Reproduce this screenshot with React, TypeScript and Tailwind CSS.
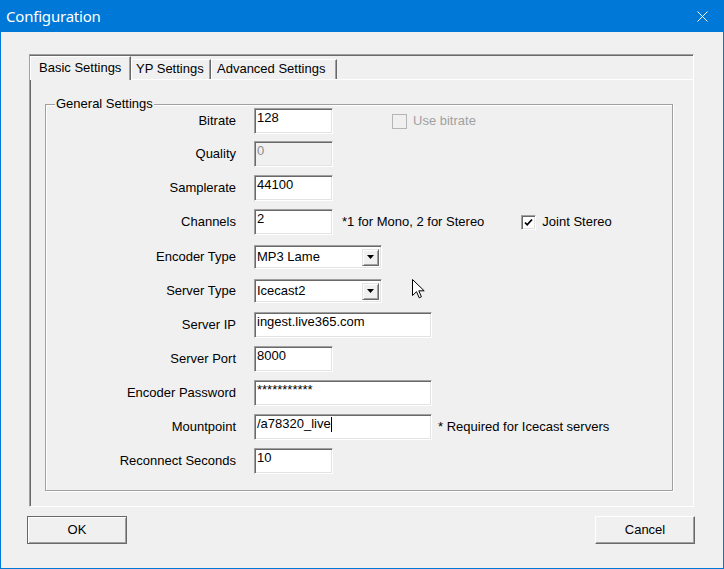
/**
 * Configuration dialog (classic Win32 look)
 */
import type { ReactNode } from 'react'

const sunken =
  'border border-t-[#a0a0a0] border-l-[#a0a0a0] border-r-white border-b-white shadow-[inset_1px_1px_0_#696969,inset_-1px_-1px_0_#e3e3e3]'

function TextBox({ width, value, disabled, children }: { width: string; value?: string; disabled?: boolean; children?: ReactNode }) {
  return (
    <div
      className={`${width} h-[26px] ${sunken} ${disabled ? 'bg-[#f0f0f0] text-[#8c8c8c]' : 'bg-white text-black'} pl-[2px] pt-px leading-[16px] flex items-start`}
    >
      {children ?? value}
    </div>
  )
}

function ComboBox({ value }: { value: string }) {
  return (
    <div className={`w-[128px] h-[24px] ${sunken} bg-white flex items-center justify-between pl-[2px] pr-[2px]`}>
      <span className="leading-[16px]">{value}</span>
      <div className="w-[17px] h-[17px] bg-[#f0f0f0] border border-t-[#e3e3e3] border-l-[#e3e3e3] border-r-[#696969] border-b-[#696969] shadow-[inset_1px_1px_0_#fff,inset_-1px_-1px_0_#a0a0a0] flex items-center justify-center">
        <svg width="7" height="4" viewBox="0 0 7 4">
          <path d="M0 0h7L3.5 4z" fill="#000" />
        </svg>
      </div>
    </div>
  )
}

function CheckBox({ label, checked, disabled }: { label: string; checked?: boolean; disabled?: boolean }) {
  return (
    <div className="flex items-center">
      <div
        className={`w-[15px] h-[15px] border ${
          disabled
            ? 'border-[#b5b5b5] bg-[#f0f0f0]'
            : `${sunken} bg-white`
        } flex items-center justify-center`}
      >
        {checked && (
          <svg width="9" height="9" viewBox="0 0 9 9">
            <path d="M1 4.5l2.2 2.3L8 1.5" fill="none" stroke="#000" strokeWidth="1.8" />
          </svg>
        )}
      </div>
      <span className={`ml-[6px] ${disabled ? 'text-[#a0a0a0]' : 'text-black'}`}>{label}</span>
    </div>
  )
}

function Row({ label, children, className = '' }: { label: string; children: ReactNode; className?: string }) {
  return (
    <div className={`flex h-[34px] items-center ${className}`}>
      <div className="w-[190px] text-right">{label}</div>
      <div className="ml-[18px] flex items-center">{children}</div>
    </div>
  )
}

function Button({ label, isDefault }: { label: string; isDefault?: boolean }) {
  return (
    <button
      className={`w-[100px] h-[28px] bg-[#f0f0f0] ${
        isDefault
          ? 'border border-[#696969] shadow-[inset_1px_1px_0_#fff,inset_-1px_-1px_0_#a0a0a0]'
          : 'border border-t-white border-l-white border-r-[#696969] border-b-[#696969] shadow-[inset_-1px_-1px_0_#a0a0a0]'
      }`}
    >
      {label}
    </button>
  )
}

export default function App() {
  return (
    <div
      className="relative w-[724px] h-[569px] bg-[#0078d7] flex flex-col px-px pb-px text-[13px] text-black"
      style={{ fontFamily: '"Liberation Sans", Arial, sans-serif' }}
    >
      {/* title bar */}
      <div className="h-[32px] flex items-center justify-between pl-[5px] pr-[15px] text-white">
        <span className="text-[15px] tracking-[-0.2px]" style={{ fontFamily: '"Noto Sans", "Open Sans", sans-serif' }}>
          Configuration
        </span>
        <svg width="11" height="11" viewBox="0 0 11 11">
          <path d="M0.5 0.5L10.5 10.5M10.5 0.5L0.5 10.5" stroke="#fff" strokeWidth="1" />
        </svg>
      </div>

      <div className="flex-1 bg-[#f0f0f0] flex flex-col pl-[28px] pt-[22px]">
        {/* tab control */}
        <div className="w-[665px] h-[453px] border border-t-[#a0a0a0] border-l-[#a0a0a0] border-r-white border-b-white shadow-[inset_1px_1px_0_#696969] flex flex-col">
          <div className="h-[24px] flex items-end">
            <div className="relative z-10 -mb-px w-[101px] h-[24px] bg-[#f0f0f0] border-t border-l border-white border-r border-r-[#696969] shadow-[inset_-1px_0_0_#a0a0a0] pl-[8px] pt-[3px] leading-[16px]">
              Basic Settings
            </div>
            <div className="w-[80px] h-[20px] border-t border-l border-white border-r border-r-[#696969] shadow-[inset_-1px_0_0_#a0a0a0] pl-[4px] pt-px leading-[16px]">
              YP Settings
            </div>
            <div className="w-[126px] h-[20px] border-t border-l border-white border-r border-r-[#696969] shadow-[inset_-1px_0_0_#a0a0a0] pl-[5px] pt-px leading-[16px]">
              Advanced Settings
            </div>
          </div>
          <div className="flex-1 border-t border-white">
            {/* group box */}
            <div className="relative ml-[15px] mt-[24px] w-[628px] h-[387px] border border-[#a0a0a0] shadow-[inset_1px_1px_0_#fff,1px_1px_0_#fff]">
              <span className="absolute left-[9px] -top-[9px] bg-[#f0f0f0] px-px leading-[16px]">General Settings</span>
              <div className="-mt-[1px] flex flex-col">
                <Row label="Bitrate">
                  <TextBox width="w-[79px]" value="128" />
                  <div className="ml-[59px]">
                    <CheckBox label="Use bitrate" disabled />
                  </div>
                </Row>
                <Row label="Quality" className="-mt-[1px]">
                  <TextBox width="w-[79px]" value="0" disabled />
                </Row>
                <Row label="Samplerate">
                  <TextBox width="w-[79px]" value="44100" />
                </Row>
                <Row label="Channels">
                  <TextBox width="w-[79px]" value="2" />
                  <span className="ml-[9px]">*1 for Mono, 2 for Stereo</span>
                  <div className="ml-[37px]">
                    <CheckBox label="Joint Stereo" checked />
                  </div>
                </Row>
                <Row label="Encoder Type" className="mt-[1px]">
                  <ComboBox value="MP3 Lame" />
                </Row>
                <Row label="Server Type">
                  <ComboBox value="Icecast2" />
                </Row>
                <Row label="Server IP">
                  <TextBox width="w-[178px]" value="ingest.live365.com" />
                </Row>
                <Row label="Server Port">
                  <TextBox width="w-[79px]" value="8000" />
                </Row>
                <Row label="Encoder Password">
                  <TextBox width="w-[178px]" value="***********" />
                </Row>
                <Row label="Mountpoint">
                  <TextBox width="w-[178px]">
                    <span>/a78320_live</span>
                    <span className="mt-px w-px h-[15px] bg-black" />
                  </TextBox>
                  <span className="ml-[6px]">* Required for Icecast servers</span>
                </Row>
                <Row label="Reconnect Seconds">
                  <TextBox width="w-[79px]" value="10" />
                </Row>
              </div>
            </div>
          </div>
        </div>

        {/* dialog buttons */}
        <div className="-ml-[2px] mt-[9px] w-[668px] flex justify-between">
          <Button label="OK" isDefault />
          <Button label="Cancel" />
        </div>
      </div>

      {/* mouse pointer */}
      <svg className="absolute left-[412px] top-[279px]" width="13" height="20" viewBox="0 0 13 20">
        <path d="M0.5 0.5V16.5L4.5 12.7L7.2 18.8L9.4 17.8L6.8 11.8H12.2Z" fill="#fff" stroke="#000" strokeWidth="1" strokeLinejoin="miter" />
      </svg>
    </div>
  )
}
